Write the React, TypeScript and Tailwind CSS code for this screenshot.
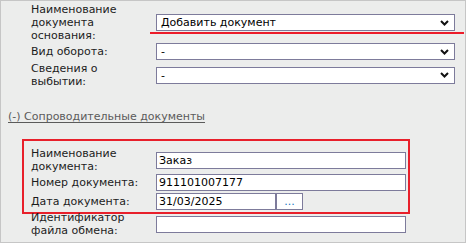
import React from 'react';

const font = { fontFamily: '"DejaVu Sans", Verdana, sans-serif' };

function Chevron() {
  return (
    <svg width="9" height="6" viewBox="0 0 9 6" className="shrink-0">
      <polyline points="1,1 4.5,4.5 8,1" fill="none" stroke="#111" strokeWidth="2" />
    </svg>
  );
}

function Select({ value }: { value: string }) {
  return (
    <div className="flex h-[17px] w-[299px] items-center justify-between border border-[#7d7b9b] bg-white pl-[4px] pr-[5px] text-[11px] leading-none text-black">
      <span>{value}</span>
      <Chevron />
    </div>
  );
}

function Input({ value, width = 'w-[250px]' }: { value?: string; width?: string }) {
  return (
    <div className={`flex h-[17px] ${width} items-center border border-[#7d7b9b] bg-white pl-[2px] text-[11px] leading-none text-black`}>
      {value}
    </div>
  );
}

export default function App() {
  return (
    <div style={font} className="relative h-[243px] w-[466px] border border-[#c6c6c6] bg-[#ecedec] pt-[2px] text-[#1c1c1c]">
      <div className="flex items-center pl-[30px]">
        <div className="w-[125px] text-[11px] leading-[13px]">
          Наименование
          <br />
          документа
          <br />
          основания:
        </div>
        <Select value="Добавить документ" />
      </div>
      <div className="absolute left-[149px] top-[31px] h-[2px] w-[314px] bg-[#ec1c2a]" />

      <div className="mt-[1px] flex items-center pl-[30px]">
        <div className="w-[125px] text-[11px] leading-[13px]">Вид оборота:</div>
        <Select value="-" />
      </div>

      <div className="mt-[2px] flex items-center pl-[30px]">
        <div className="w-[125px] text-[11px] leading-[13px]">
          Сведения о
          <br />
          выбытии:
        </div>
        <Select value="-" />
      </div>

      <div className="mt-[22px] pl-[7px] text-[11px] leading-[13px]">
        <a href="#" className="text-[#5b5b5b] underline underline-offset-2">
          (-) Сопроводительные документы
        </a>
      </div>

      <div className="ml-[21px] mt-[16px] w-[388px] border-2 border-[#e8202b] pb-[2px] pl-[7px] pr-[2px] pt-[6px]">
        <div className="flex items-center">
          <div className="w-[125px] text-[11px] leading-[13px]">
            Наименование
            <br />
            документа:
          </div>
          <Input value="Заказ" />
        </div>
        <div className="mt-[1px] flex items-center">
          <div className="w-[125px] text-[11px] leading-[13px]">Номер документа:</div>
          <Input value="911101007177" />
        </div>
        <div className="mt-[2px] flex items-center">
          <div className="w-[125px] text-[11px] leading-[13px]">Дата документа:</div>
          <Input value="31/03/2025" width="w-[120px]" />
          <div className="flex h-[17px] w-[27px] items-end justify-center border border-[#7d7b9b] bg-white pb-[2px] text-[11px] leading-none text-[#1677c4]">
            ...
          </div>
        </div>
      </div>

      <div className="-mt-[3px] flex items-center pl-[30px]">
        <div className="w-[125px] text-[11px] leading-[13px]">
          Идентификатор
          <br />
          файла обмена:
        </div>
        <Input />
      </div>
    </div>
  );
}
